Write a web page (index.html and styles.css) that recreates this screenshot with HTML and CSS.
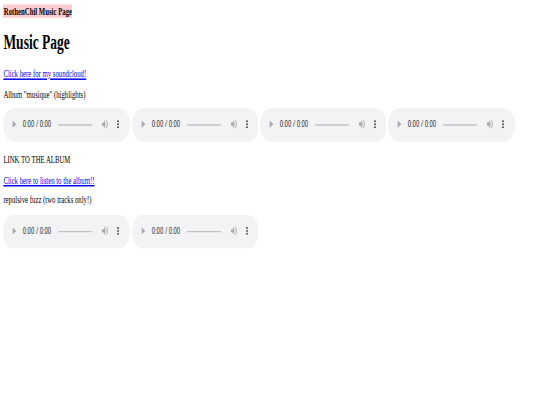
FILE: index.html
```html
<!DOCTYPE html>
<html lang="en">
<head>
    <meta charset="UTF-8">
    <title>Music Page</title>
    <link rel="stylesheet" href="styles.css">
</head>
<body>
    <div class="page">
        <span class="site-title">RothenChil Music Page</span>

        <h1>Music Page</h1>

        <p><a href="#">Click here for my soundcloud!</a></p>

        <p>Album "musique" (highlights)</p>
        <div class="tracks">
            <audio controls></audio>
            <audio controls></audio>
            <audio controls></audio>
            <audio controls></audio>
        </div>

        <p>LINK TO THE ALBUM</p>
        <p><a href="#">Click here to listen to the album!!</a></p>

        <p>repulsive fuzz (two tracks only!)</p>
        <div class="tracks">
            <audio controls></audio>
            <audio controls></audio>
        </div>
    </div>
</body>
</html>
```
FILE: styles.css
```css
body {
    margin: 0;
    min-height: 100vh;
}

.page {
    width: 1240px;
    padding: 8px;
    font-family: "Liberation Serif", serif;
    font-size: 16px;
    color: #000;
    zoom: 0.421875;
    transform: scaleY(1.48);
    transform-origin: 0 0;
}

.site-title {
    display: inline-block;
    background: #fbcdd0;
    font-weight: bold;
    padding: 2px 1px;
}

h1 {
    font-size: 32px;
    margin: 21px 0;
}

p {
    margin: 16px 0;
}

a {
    color: #0000ee;
}
```
